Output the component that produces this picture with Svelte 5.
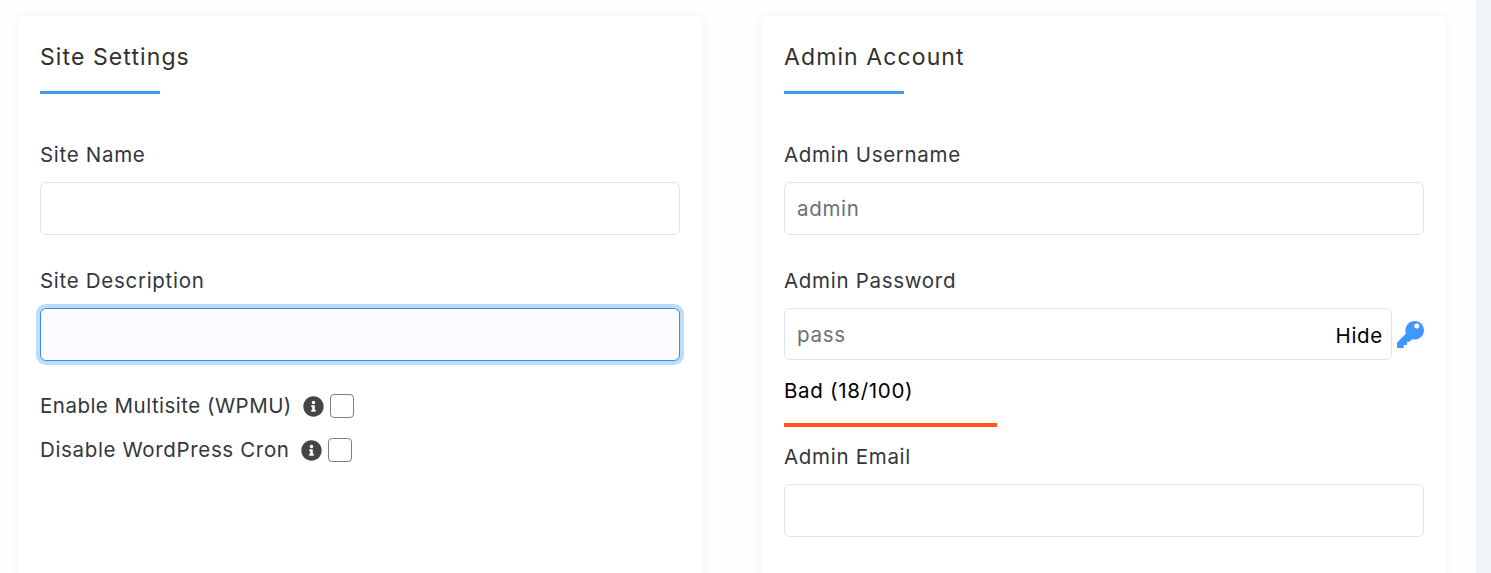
<script>
    let showPass = $state(true);
    let password = $state('');
    const score = 18;
</script>

<div class="page">
    <main class="columns">
        <section class="card">
            <h2 class="card-title">Site Settings</h2>

            <div class="field">
                <label for="site-name">Site Name</label>
                <input id="site-name" type="text" />
            </div>

            <div class="field">
                <label for="site-desc">Site Description</label>
                <input id="site-desc" class="focused" type="text" />
            </div>

            <div class="check-row first">
                <span class="check-label">Enable Multisite (WPMU)</span>
                <svg class="info" viewBox="0 0 512 512" aria-hidden="true">
                    <path d="M256 8C119 8 8 119 8 256s111 248 248 248 248-111 248-248S393 8 256 8zm0 110c23 0 42 19 42 42s-19 42-42 42-42-19-42-42 19-42 42-42zm56 254c0 7-5 12-12 12h-88c-7 0-12-5-12-12v-24c0-7 5-12 12-12h12v-64h-12c-7 0-12-5-12-12v-24c0-7 5-12 12-12h64c7 0 12 5 12 12v100h12c7 0 12 5 12 12v24z" />
                </svg>
                <span class="box"></span>
            </div>
            <div class="check-row">
                <span class="check-label">Disable WordPress Cron</span>
                <svg class="info" viewBox="0 0 512 512" aria-hidden="true">
                    <path d="M256 8C119 8 8 119 8 256s111 248 248 248 248-111 248-248S393 8 256 8zm0 110c23 0 42 19 42 42s-19 42-42 42-42-19-42-42 19-42 42-42zm56 254c0 7-5 12-12 12h-88c-7 0-12-5-12-12v-24c0-7 5-12 12-12h12v-64h-12c-7 0-12-5-12-12v-24c0-7 5-12 12-12h64c7 0 12 5 12 12v100h12c7 0 12 5 12 12v24z" />
                </svg>
                <span class="box"></span>
            </div>
        </section>

        <section class="card">
            <h2 class="card-title">Admin Account</h2>

            <div class="field">
                <label for="admin-user">Admin Username</label>
                <input id="admin-user" type="text" placeholder="admin" />
            </div>

            <div class="field">
                <label for="admin-pass">Admin Password</label>
                <div class="pass-row">
                    <div class="pass-wrap">
                        <input id="admin-pass" type="text" placeholder="pass" bind:value={password} />
                        <button class="hide-btn" onclick={() => (showPass = !showPass)}>{showPass ? 'Hide' : 'Show'}</button>
                    </div>
                    <svg class="key" viewBox="0 0 512 512" aria-hidden="true">
                        <path d="M336 0c97 0 176 79 176 176S433 352 336 352c-19 0-37-3-54-8l-36 41c-5 5-11 8-18 8h-36v40c0 13-11 24-24 24h-40v40c0 13-11 24-24 24H24c-13 0-24-11-24-24v-78c0-6 3-12 7-17l161-161c-5-17-8-35-8-54C160 79 239 0 336 0zm40 144a48 48 0 1 0 0-96 48 48 0 1 0 0 96z" fill-rule="evenodd" />
                    </svg>
                </div>
                <div class="strength">Bad ({score}/100)</div>
                <div class="meter" style="width: {(score / 54) * 100}%"></div>
            </div>

            <div class="field email">
                <label for="admin-email">Admin Email</label>
                <input id="admin-email" type="text" />
            </div>
        </section>
    </main>
</div>

<style>
    :global(body) {
        margin: 0;
        background: #f0f5fa;
        overflow: hidden;
    }

    .page {
        width: 1476px;
        height: 573px;
        overflow: hidden;
        background: #fefefe;
        font-family: Inter, "Noto Sans", sans-serif;
        font-size: 20.5px;
        letter-spacing: 0.7px;
        color: #32373c;
    }

    .columns {
        display: grid;
        grid-template-columns: 685px 685px;
        gap: 58px;
        padding: 16px 0 0 18px;
    }

    .card {
        height: 620px;
        padding: 0 23px 0 22px;
        box-sizing: border-box;
        background: #fff;
        border-radius: 8px;
        box-shadow: 0 0 8px rgba(0, 0, 0, 0.06);
    }

    .card + .card {
        padding: 0 22px 0 23px;
    }

    .card-title {
        position: relative;
        height: 78px;
        margin: 0 0 44px;
        padding-top: 25px;
        box-sizing: border-box;
        font-size: 23px;
        font-weight: 400;
        letter-spacing: 1.1px;
        line-height: 33px;
        color: #32302e;
    }

    .card-title::after {
        content: "";
        position: absolute;
        left: 0;
        bottom: 0;
        width: 120px;
        height: 3px;
        background: #4596ee;
    }

    .field {
        margin-bottom: 29px;
    }

    .field label {
        display: block;
        height: 30px;
        margin-bottom: 14px;
        line-height: 33px;
    }

    input {
        display: block;
        width: 100%;
        height: 53px;
        padding: 0 12px;
        box-sizing: border-box;
        background: #fff;
        border: 1px solid #e2e4e7;
        border-radius: 6px;
        outline: none;
        font: inherit;
        letter-spacing: inherit;
        color: #32373c;
    }

    input::placeholder {
        color: #6c7175;
        opacity: 1;
    }

    input.focused {
        background: #fafcff;
        border-color: #3a8fdc;
        box-shadow: 0 0 0 4px #bcdcfd;
    }

    .check-row {
        display: flex;
        align-items: center;
        height: 24px;
        margin-top: 20px;
    }

    .check-row.first {
        margin-top: 33px;
    }

    .check-label {
        margin-bottom: 2px;
        letter-spacing: 0.65px;
    }

    .first .check-label {
        letter-spacing: 0.48px;
    }

    .info {
        width: 21px;
        height: 21px;
        margin-left: 11px;
        fill: #454545;
        flex: none;
    }

    .box {
        width: 22px;
        height: 22px;
        margin-left: 6px;
        background: #fff;
        border: 1px solid #7f7f7f;
        border-radius: 4px;
        flex: none;
    }

    .pass-row {
        display: flex;
        align-items: flex-start;
        gap: 5px;
    }

    .pass-wrap {
        position: relative;
        flex: none;
        width: 608px;
    }

    .pass-wrap input {
        height: 52px;
    }

    .hide-btn {
        position: absolute;
        right: 9px;
        top: 13px;
        padding: 0;
        border: none;
        background: none;
        font: inherit;
        letter-spacing: inherit;
        line-height: 30px;
        color: #000;
        cursor: pointer;
    }

    .key {
        width: 27px;
        height: 27px;
        margin-top: 13px;
        fill: #3f97fd;
        flex: none;
    }

    .strength {
        margin-top: 14px;
        line-height: 34px;
        color: #000;
    }

    .meter {
        height: 4px;
        margin-top: 15px;
        background: #ff5722;
    }

    .field.email {
        margin-top: -16px;
    }
</style>
